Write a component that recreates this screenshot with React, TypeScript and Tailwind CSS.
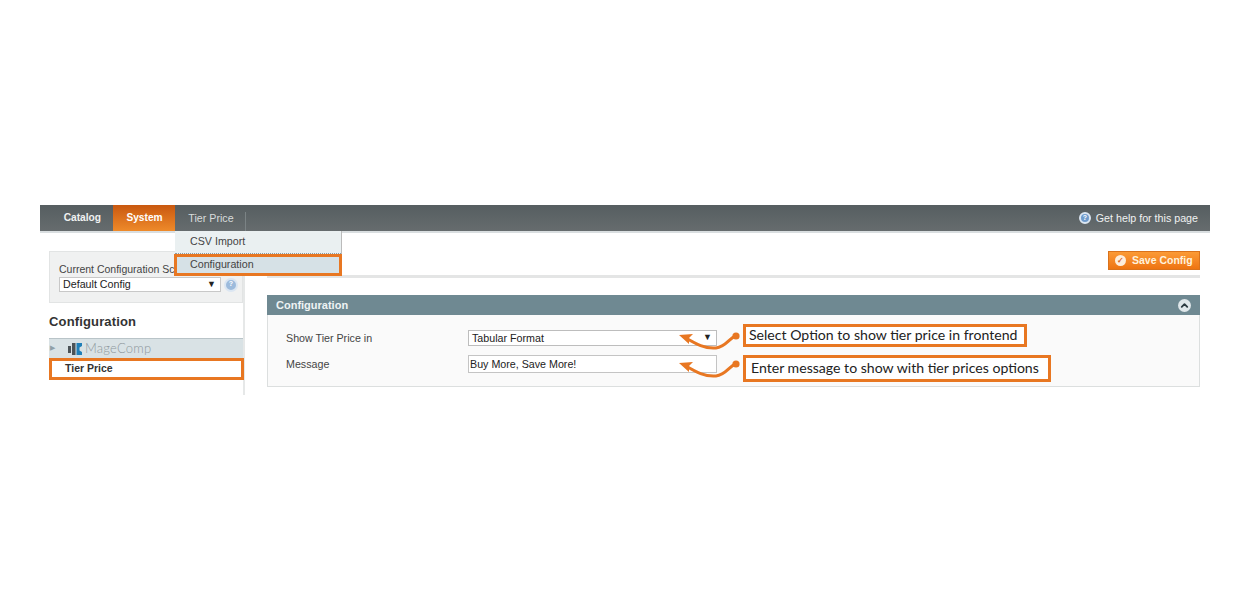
import { ChevronUp } from "lucide-react";

const sans = "font-['Liberation_Sans',Arial,sans-serif]";

function HelpDot({ className }: { className: string }) {
  return (
    <span
      className={`flex items-center justify-center rounded-full border-2 border-[#dbe6f2] bg-[#6f9bcc] font-bold text-white ${className}`}
    >
      ?
    </span>
  );
}

function Arrow({ className }: { className: string }) {
  return (
    <svg viewBox="0 0 62 22" className={className} fill="none">
      <path d="M8 7 C18 13 27 18 38 17 C48 16 51 7 58 5" stroke="#e87722" strokeWidth="3" strokeLinecap="round" />
      <path d="M1 4 L15 3 L11 7 L11 13 Z" fill="#e87722" />
      <circle cx="58" cy="5" r="3.6" fill="#e87722" />
    </svg>
  );
}

function MageCompLogo() {
  return (
    <svg viewBox="0 0 14 14" className="h-[14px] w-[14px]">
      <rect x="0" y="4" width="3" height="7" fill="#4b5357" />
      <rect x="4" y="1" width="3.5" height="12" fill="#4b5357" />
      <path d="M8.5 1 H14 V4 L11.5 5.5 V8.5 L14 10 V13 H8.5 Z" fill="#1f7fb8" />
    </svg>
  );
}

function NavBar() {
  return (
    <div className="-mb-[1px] box-content flex h-[26px] items-stretch justify-between border-b-2 border-[#d9dee0] bg-gradient-to-b from-[#565e61] to-[#666c6e] text-[10.2px]">
      <div className="flex items-stretch">
        <span className="flex w-[73px] items-center justify-end pr-[12px] font-bold text-[#f0f2f2]">Catalog</span>
        <span className="flex w-[62px] items-center justify-center bg-gradient-to-b from-[#c9580f] to-[#ee8a2a] pl-[1px] font-bold text-white">
          System
        </span>
        <span className="flex w-[70px] items-center justify-center pl-[2px] text-[10.7px] text-[#d8dcdc]">Tier Price</span>
        <span className="mt-[7px] w-px bg-[#7b8385]" />
      </div>
      <div className="flex items-center gap-[5px] pr-[12px] text-[#f0f2f2]">
        <HelpDot className="h-[12px] w-[12px] text-[7px]" />
        <span className="text-[10.7px]">Get help for this page</span>
      </div>
    </div>
  );
}

function Sidebar() {
  return (
    <div className="flex h-[144px] w-[196px] shrink-0 flex-col border-r-2 border-[#e6e8e8]">
      <div className="h-[52px] border border-[#e2e4e4] bg-[#f0f1f1] pl-[9px] pt-[10px] text-[#444]">
        <div className="h-[14px] whitespace-nowrap text-[10.5px] leading-[14px]">Current Configuration Scope:</div>
        <div className="mt-[1px] flex items-center gap-[3px]">
          <div className="flex h-[15px] w-[162px] items-center justify-between border border-[#c8c8c8] bg-white pl-[3px] pr-[4px] text-[10.7px] text-[#222]">
            <span>Default Config</span>
            <span className="text-[9px]">▼</span>
          </div>
          <HelpDot className="h-[14px] w-[14px] border-[#c5d5e6] bg-[#9dbbdc] text-[7px]" />
        </div>
      </div>
      <div className="pb-[7px] pt-[10px] text-[13px] font-bold leading-[18px] tracking-[0.15px] text-[#333]">Configuration</div>
      <div className="flex h-[20px] items-center border-t border-[#b9c4c8] bg-[#d9e2e5] pl-[1px]">
        <span className="w-[18px] text-[7px] text-[#8fa0a8]">▶</span>
        <MageCompLogo />
        <span className="ml-[3px] font-['Lato',sans-serif] text-[13px] font-light tracking-[0.2px] text-[#8f999e]">MageComp</span>
      </div>
      <div className="flex h-[22px] w-[195px] items-center border-[3px] border-[#e87722] bg-white pl-[13px] text-[10.5px] font-bold text-[#333]">
        Tier Price
      </div>
    </div>
  );
}

function Panel() {
  return (
    <div className="mt-[17px]">
      <div className="flex h-[20px] items-center justify-between bg-[#6f8992] pl-[9px] pr-[9px] text-[11px] font-bold text-[#eef3f4]">
        <span>Configuration</span>
        <span className="flex h-[13px] w-[13px] items-center justify-center rounded-full bg-[#dfe7ea] text-[#2c3a40]">
          <ChevronUp size={11} strokeWidth={4} />
        </span>
      </div>
      <div className="flex h-[72px] flex-col border border-t-0 border-[#dcdfdf] bg-[#fafafa] pl-[18px] pt-[15px] text-[10.7px] text-[#444]">
        <div className="flex h-[16px] items-center">
          <span className="w-[182px]">Show Tier Price in</span>
          <div className="flex h-[16px] w-[249px] items-center justify-between border border-[#bdbdbd] bg-white pl-[3px] pr-[4px] text-[#222]">
            <span>Tabular Format</span>
            <span className="text-[9px]">▼</span>
          </div>
        </div>
        <div className="mt-[9px] flex h-[18px] items-center">
          <span className="w-[182px]">Message</span>
          <div className="flex h-[18px] w-[249px] items-center border border-[#c4c4c4] bg-white pl-[1px] text-[#222]">
            Buy More, Save More!
          </div>
        </div>
      </div>
    </div>
  );
}

export default function App() {
  return (
    <div className={`relative h-[600px] w-[1250px] overflow-hidden bg-white px-[40px] pt-[205px] ${sans}`}>
      <NavBar />
      <div className="flex pl-[9px] pr-[10px] pt-[19px]">
        <Sidebar />
        <div className="min-w-0 flex-1 pl-[22px]">
          <div className="flex h-[24px] justify-end">
            <button className="flex h-[19px] w-[92px] items-center gap-[6px] border border-[#d9721c] bg-gradient-to-b from-[#fb9a35] to-[#ee7410] pl-[6px] text-[10.5px] font-bold text-[#fff2dc]">
              <span className="flex h-[11px] w-[11px] items-center justify-center rounded-full bg-[#fdeedd] text-[8px] leading-none text-[#d9601a]">
                ✓
              </span>
              Save Config
            </button>
          </div>
          <div className="h-[3px] bg-[#e4e5e5]" />
          <Panel />
        </div>
      </div>

      {/* dropdown from the Tier Price tab */}
      <div className="absolute left-[175px] top-[231px] w-[167px] text-[10.7px] text-[#444]">
        <div className="mr-[1px] flex h-[23px] items-center border-b border-dotted border-[#8c9aa0] bg-[#eaf0f1] pb-[2px] pl-[15px] shadow-[1px_0_0_#bbb]">
          CSV Import
        </div>
        <div className="-ml-[1px] flex h-[22px] items-center border-[3px] border-[#e87722] bg-[#d6e1e6] pb-[2px] pl-[13px]">
          Configuration
        </div>
      </div>

      {/* annotations */}
      <Arrow className="absolute left-[678px] top-[331px] h-[22px] w-[62px]" />
      <Arrow className="absolute left-[678px] top-[359px] h-[22px] w-[62px]" />
      <div className="absolute left-[743px] top-[324px] flex h-[23px] w-[284px] items-center whitespace-nowrap border-[3px] border-[#e87722] bg-white pb-[2px] pl-[3px] font-['Lato',sans-serif] text-[14.1px] text-[#222]">
        Select Option to show tier price in frontend
      </div>
      <div className="absolute left-[743px] top-[355px] flex h-[27px] w-[308px] items-center whitespace-nowrap border-[3px] border-[#e87722] bg-white pb-[2px] pl-[5px] font-['Lato',sans-serif] text-[14.1px] text-[#222]">
        Enter message to show with tier prices options
      </div>
    </div>
  );
}
